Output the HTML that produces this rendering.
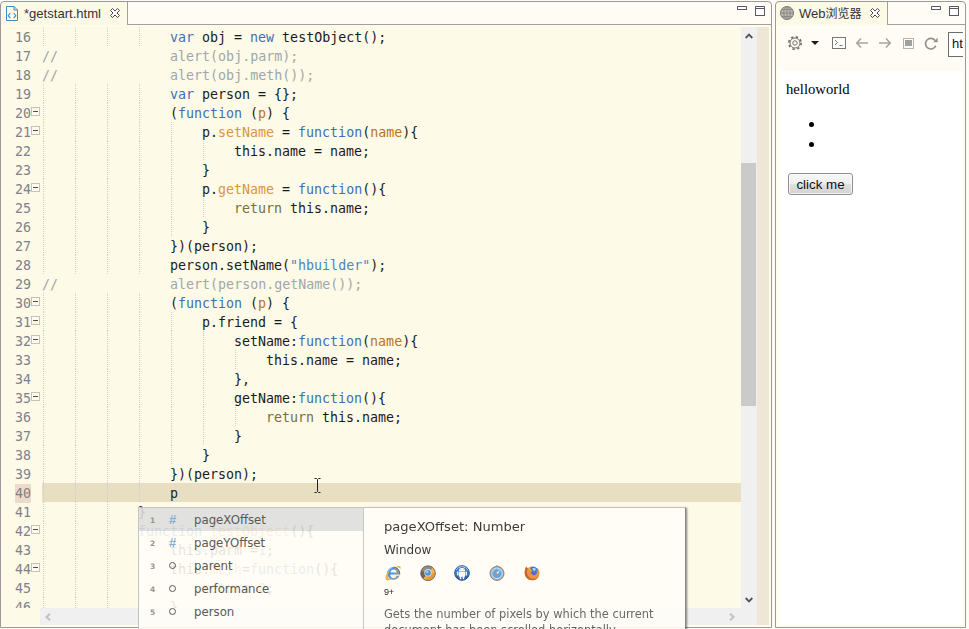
<!DOCTYPE html>
<html><head><meta charset="utf-8"><title>HBuilder</title>
<style>
*{margin:0;padding:0;box-sizing:border-box}
html,body{width:969px;height:629px;overflow:hidden;background:#fdfbf5}
body{position:relative;font-family:"Liberation Sans","Noto Sans CJK SC",sans-serif;font-size:12px;color:#222}
.abs{position:absolute}
/* panels */
.frame{position:absolute;top:1px;height:627px;border:1px solid #9a9a9a;border-radius:4px 4px 0 0;background:#fffde9}
#lp{left:0;width:772px}
#rp{left:775px;width:191px}
.tabbar{position:absolute;top:2px;height:23px;background:#fefcf5;border-bottom:1px solid #a0a0a0}
.tab{position:absolute;top:2px;height:23px;background:#fdf9e7;border-right:1px solid #a0a0a0}
.tabtxt{position:absolute;white-space:nowrap;color:#333}
.ic-min{position:absolute;width:10px;height:4px;border:1px solid #5c5763;background:#fff;border-radius:.5px}
.ic-max{position:absolute;width:10px;height:10px;border:1px solid #5c5763;background:#fff;border-radius:.5px}
.ic-max:after{content:"";position:absolute;left:0;right:0;top:1px;height:1px;background:#5c5763}
/* editor */
#ed{position:absolute;left:0;top:27px;width:741px;height:581px;background:#fdfae8;overflow:hidden;font-family:"DejaVu Sans Mono","Liberation Mono",monospace;font-size:13.3px;color:#1a1a1a}
.ln{position:absolute;left:0;width:741px;height:19px;line-height:19px;white-space:pre}
.ln.cur:before{content:"";position:absolute;left:42px;right:0;top:0;height:19px;background:#e8dfc3}
.ln.cur .num{background:#ecdbca}
.num{position:absolute;top:1px;left:15px;width:16px;text-align:right;color:#828088;letter-spacing:0}
.fold{position:absolute;left:31px;top:4px;width:9px;height:9px;border:1px solid #c3c3b8;background:#fefcf2}
.fold:after{content:"";position:absolute;left:1px;top:3px;width:5px;height:1px;background:#6b4a1f}
.g{position:absolute;top:0;width:1px;height:19px;background:repeating-linear-gradient(to bottom,#cfcfc6 0,#cfcfc6 1px,transparent 1px,transparent 2px)}
.code{position:absolute;top:1px}
.code b{font-weight:normal}
.k{color:#3f6fb3}.f{color:#d99544}.p{color:#b8741f}.c{color:#9ea8aa}.s{color:#4a86c0}.r{color:#7a6e3a}

.frame{pointer-events:none}
.fb{position:absolute;top:2px;height:625px;background:#fffde9}
.sb{position:absolute;background:#f0f0f0}
.thumb{position:absolute;background:#cacaca}
.ovr{position:absolute;background:#eee7d8}
svg{position:absolute;overflow:visible}
/* browser */
#tb{position:absolute;left:778px;top:25px;width:185px;height:46px;background:#fefcf5;overflow:hidden}
#bc{position:absolute;left:778px;top:71px;width:185px;height:554px;background:#fff;font-family:"Liberation Serif",serif;font-size:14.7px;color:#000}
#url{position:absolute;left:170px;top:7px;width:20px;height:25px;border:1px solid #6e6e6e;border-right:0;background:#fff;font-size:13px;line-height:22px;padding-left:3px;color:#111;overflow:hidden}
.btn{position:absolute;left:10px;top:102px;width:65px;height:22px;border:1px solid #8e8f8f;border-radius:3px;background:linear-gradient(#f6f6f6,#f0f0f0 45%,#dedede 55%,#d3d3d3);font-family:"Liberation Sans",sans-serif;font-size:13.33px;line-height:21px;text-align:center;color:#111;box-shadow:inset 0 0 0 1px rgba(255,255,255,.7)}
/* popup */
#pop{position:absolute;left:138px;top:507px;width:549px;height:125px;opacity:.885;z-index:10}
#plist{position:absolute;left:0;top:0;width:226px;height:125px;background:#fffdf6;border:1px solid #bdbdbd;border-right:1px solid #c9c9c9}
#pdoc{position:absolute;left:226px;top:0;width:322px;height:125px;background:#fffdf6;border-top:1px solid #bdbdbd;border-right:1px solid #777;box-shadow:1px 1px 2px rgba(0,0,0,.55)}
.row{position:absolute;left:0;width:224px;height:23px;line-height:25px;font-size:11.75px;color:#444;font-family:"DejaVu Sans","Liberation Sans",sans-serif}
.row.sel{background:#dedede}
.row .n{position:absolute;left:11px;top:0;font-size:7.5px;font-weight:bold;color:#8a8a80;font-family:"DejaVu Sans","Liberation Sans",sans-serif}
.row .h{position:absolute;left:30px;top:-1px;font-size:13px;font-weight:bold;color:#78a4d0;font-family:"Liberation Sans",sans-serif}
.row .o{position:absolute;left:30px;top:7.5px;width:7px;height:7px;border:1.1px solid #444;border-radius:50%}
.row .t{position:absolute;left:55px;top:0;white-space:nowrap}
.dt{position:absolute;left:20px;white-space:nowrap;color:#222;font-family:"DejaVu Sans","Liberation Sans",sans-serif}
</style></head><body>
<div class="fb" style="left:1px;width:770px"></div>
<div class="fb" style="left:776px;width:189px"></div>
<div class="tabbar" style="left:1px;width:770px"></div>
<div class="tab" style="left:1px;width:127px"></div>
<div class="tabbar" style="left:776px;width:189px"></div>
<div class="tab" style="left:776px;width:112px"></div>
<!-- left tab content -->
<svg style="left:6px;top:6px" width="12" height="15" viewBox="0 0 12 15"><path d="M0.5 0.5H8L11.5 4V14.5H0.5Z" fill="none" stroke="#3e8acc"/><path d="M8 0.5V4H11.5" fill="none" stroke="#3e8acc"/><path d="M4.3 7.2L2.2 9.7L4.3 12.2M7.7 7.2L9.8 9.7L7.7 12.2" fill="none" stroke="#3e8acc" stroke-width="1.1"/></svg>
<div class="tabtxt" id="t1" style="left:24px;top:6px;font-size:13.07px;line-height:16px">*getstart.html</div>
<svg class="cx" style="left:110px;top:8px" width="10" height="10" viewBox="0 0 10 10"><path d="M0.5 2.5L2.5 0.5L5 3L7.5 0.5L9.5 2.5L7 5L9.5 7.5L7.5 9.5L5 7L2.5 9.5L0.5 7.5L3 5Z" fill="#fff" stroke="#4a4553" stroke-width="1"/></svg>
<div class="ic-min" style="left:737px;top:6px"></div>
<div class="ic-max" style="left:755px;top:6px"></div>
<!-- right tab content -->
<svg style="left:780px;top:6px" width="14" height="14" viewBox="0 0 14 14"><circle cx="7" cy="7" r="6.5" fill="#b9b9b4" stroke="#77756f"/><path d="M7 0.5V13.5M0.5 7H13.5M1.8 3.5H12.2M1.8 10.5H12.2" stroke="#8b8a84" stroke-width="1" fill="none"/><ellipse cx="7" cy="7" rx="3.2" ry="6.5" fill="none" stroke="#8b8a84"/></svg>
<div class="tabtxt" id="t2" style="left:799px;top:5px;font-size:12px;line-height:17px"><span style="font-size:13px">Web</span>浏览器</div>
<svg class="cx" style="left:870px;top:8px" width="10" height="10" viewBox="0 0 10 10"><path d="M0.5 2.5L2.5 0.5L5 3L7.5 0.5L9.5 2.5L7 5L9.5 7.5L7.5 9.5L5 7L2.5 9.5L0.5 7.5L3 5Z" fill="#fff" stroke="#4a4553" stroke-width="1"/></svg>
<div class="ic-min" style="left:931px;top:6px"></div>
<div class="ic-max" style="left:949px;top:6px"></div>
<!-- editor -->
<div id="ed">
<div class="ln" style="top:0px"><span class="num">16</span><i class="g" style="left:43px"></i><i class="g" style="left:75px"></i><i class="g" style="left:107px"></i><i class="g" style="left:139px"></i><span class="code" style="left:170px"><b class="k">var</b> obj = <b class="k">new</b> testObject();</span></div>
<div class="ln" style="top:19px"><span class="num">17</span><span class="code" style="left:42px"><b class="c">//              alert(obj.parm);</b></span></div>
<div class="ln" style="top:38px"><span class="num">18</span><span class="code" style="left:42px"><b class="c">//              alert(obj.meth());</b></span></div>
<div class="ln" style="top:57px"><span class="num">19</span><i class="g" style="left:43px"></i><i class="g" style="left:75px"></i><i class="g" style="left:107px"></i><i class="g" style="left:139px"></i><span class="code" style="left:170px"><b class="k">var</b> person = {};</span></div>
<div class="ln" style="top:76px"><span class="num">20</span><i class="fold"></i><i class="g" style="left:43px"></i><i class="g" style="left:75px"></i><i class="g" style="left:107px"></i><i class="g" style="left:139px"></i><span class="code" style="left:170px">(<b class="k">function</b> (<b class="p">p</b>) {</span></div>
<div class="ln" style="top:95px"><span class="num">21</span><i class="fold"></i><i class="g" style="left:43px"></i><i class="g" style="left:75px"></i><i class="g" style="left:107px"></i><i class="g" style="left:139px"></i><i class="g" style="left:171px"></i><span class="code" style="left:202px">p.<b class="f">setName</b> = <b class="k">function</b>(<b class="p">name</b>){</span></div>
<div class="ln" style="top:114px"><span class="num">22</span><i class="g" style="left:43px"></i><i class="g" style="left:75px"></i><i class="g" style="left:107px"></i><i class="g" style="left:139px"></i><i class="g" style="left:171px"></i><i class="g" style="left:203px"></i><span class="code" style="left:234px">this.name = name;</span></div>
<div class="ln" style="top:133px"><span class="num">23</span><i class="g" style="left:43px"></i><i class="g" style="left:75px"></i><i class="g" style="left:107px"></i><i class="g" style="left:139px"></i><i class="g" style="left:171px"></i><span class="code" style="left:202px">}</span></div>
<div class="ln" style="top:152px"><span class="num">24</span><i class="fold"></i><i class="g" style="left:43px"></i><i class="g" style="left:75px"></i><i class="g" style="left:107px"></i><i class="g" style="left:139px"></i><i class="g" style="left:171px"></i><span class="code" style="left:202px">p.<b class="f">getName</b> = <b class="k">function</b>(){</span></div>
<div class="ln" style="top:171px"><span class="num">25</span><i class="g" style="left:43px"></i><i class="g" style="left:75px"></i><i class="g" style="left:107px"></i><i class="g" style="left:139px"></i><i class="g" style="left:171px"></i><i class="g" style="left:203px"></i><span class="code" style="left:234px"><b class="r">return</b> this.name;</span></div>
<div class="ln" style="top:190px"><span class="num">26</span><i class="g" style="left:43px"></i><i class="g" style="left:75px"></i><i class="g" style="left:107px"></i><i class="g" style="left:139px"></i><i class="g" style="left:171px"></i><span class="code" style="left:202px">}</span></div>
<div class="ln" style="top:209px"><span class="num">27</span><i class="g" style="left:43px"></i><i class="g" style="left:75px"></i><i class="g" style="left:107px"></i><i class="g" style="left:139px"></i><span class="code" style="left:170px">})(person);</span></div>
<div class="ln" style="top:228px"><span class="num">28</span><i class="g" style="left:43px"></i><i class="g" style="left:75px"></i><i class="g" style="left:107px"></i><i class="g" style="left:139px"></i><span class="code" style="left:170px">person.setName(<b class="s">"hbuilder"</b>);</span></div>
<div class="ln" style="top:247px"><span class="num">29</span><span class="code" style="left:42px"><b class="c">//              alert(person.getName());</b></span></div>
<div class="ln" style="top:266px"><span class="num">30</span><i class="fold"></i><i class="g" style="left:43px"></i><i class="g" style="left:75px"></i><i class="g" style="left:107px"></i><i class="g" style="left:139px"></i><span class="code" style="left:170px">(<b class="k">function</b> (<b class="p">p</b>) {</span></div>
<div class="ln" style="top:285px"><span class="num">31</span><i class="fold"></i><i class="g" style="left:43px"></i><i class="g" style="left:75px"></i><i class="g" style="left:107px"></i><i class="g" style="left:139px"></i><i class="g" style="left:171px"></i><span class="code" style="left:202px">p.friend = {</span></div>
<div class="ln" style="top:304px"><span class="num">32</span><i class="fold"></i><i class="g" style="left:43px"></i><i class="g" style="left:75px"></i><i class="g" style="left:107px"></i><i class="g" style="left:139px"></i><i class="g" style="left:171px"></i><i class="g" style="left:203px"></i><span class="code" style="left:234px">setName:<b class="k">function</b>(<b class="p">name</b>){</span></div>
<div class="ln" style="top:323px"><span class="num">33</span><i class="g" style="left:43px"></i><i class="g" style="left:75px"></i><i class="g" style="left:107px"></i><i class="g" style="left:139px"></i><i class="g" style="left:171px"></i><i class="g" style="left:203px"></i><i class="g" style="left:235px"></i><span class="code" style="left:266px">this.name = name;</span></div>
<div class="ln" style="top:342px"><span class="num">34</span><i class="g" style="left:43px"></i><i class="g" style="left:75px"></i><i class="g" style="left:107px"></i><i class="g" style="left:139px"></i><i class="g" style="left:171px"></i><i class="g" style="left:203px"></i><span class="code" style="left:234px">},</span></div>
<div class="ln" style="top:361px"><span class="num">35</span><i class="fold"></i><i class="g" style="left:43px"></i><i class="g" style="left:75px"></i><i class="g" style="left:107px"></i><i class="g" style="left:139px"></i><i class="g" style="left:171px"></i><i class="g" style="left:203px"></i><span class="code" style="left:234px">getName:<b class="k">function</b>(){</span></div>
<div class="ln" style="top:380px"><span class="num">36</span><i class="g" style="left:43px"></i><i class="g" style="left:75px"></i><i class="g" style="left:107px"></i><i class="g" style="left:139px"></i><i class="g" style="left:171px"></i><i class="g" style="left:203px"></i><i class="g" style="left:235px"></i><span class="code" style="left:266px"><b class="r">return</b> this.name;</span></div>
<div class="ln" style="top:399px"><span class="num">37</span><i class="g" style="left:43px"></i><i class="g" style="left:75px"></i><i class="g" style="left:107px"></i><i class="g" style="left:139px"></i><i class="g" style="left:171px"></i><i class="g" style="left:203px"></i><span class="code" style="left:234px">}</span></div>
<div class="ln" style="top:418px"><span class="num">38</span><i class="g" style="left:43px"></i><i class="g" style="left:75px"></i><i class="g" style="left:107px"></i><i class="g" style="left:139px"></i><i class="g" style="left:171px"></i><span class="code" style="left:202px">}</span></div>
<div class="ln" style="top:437px"><span class="num">39</span><i class="g" style="left:43px"></i><i class="g" style="left:75px"></i><i class="g" style="left:107px"></i><i class="g" style="left:139px"></i><span class="code" style="left:170px">})(person);</span></div>
<div class="ln cur" style="top:456px"><span class="num">40</span><i class="g" style="left:43px"></i><i class="g" style="left:75px"></i><i class="g" style="left:107px"></i><i class="g" style="left:139px"></i><span class="code" style="left:170px">p</span></div>
<div class="ln" style="top:475px"><span class="num">41</span><i class="g" style="left:43px"></i><i class="g" style="left:75px"></i><i class="g" style="left:107px"></i><span class="code" style="left:138px">}</span></div>
<div class="ln" style="top:494px"><span class="num">42</span><i class="fold"></i><i class="g" style="left:43px"></i><i class="g" style="left:75px"></i><i class="g" style="left:107px"></i><span class="code" style="left:138px"><b class="k">function</b> <b class="f">testObject</b>(){</span></div>
<div class="ln" style="top:513px"><span class="num">43</span><i class="g" style="left:43px"></i><i class="g" style="left:75px"></i><i class="g" style="left:107px"></i><i class="g" style="left:139px"></i><span class="code" style="left:170px">this.parm =<b class="s">1</b>;</span></div>
<div class="ln" style="top:532px"><span class="num">44</span><i class="fold"></i><i class="g" style="left:43px"></i><i class="g" style="left:75px"></i><i class="g" style="left:107px"></i><i class="g" style="left:139px"></i><span class="code" style="left:170px">this.<b class="f">meth</b>=<b class="k">function</b>(){</span></div>
<div class="ln" style="top:551px"><span class="num">45</span><i class="g" style="left:43px"></i><i class="g" style="left:75px"></i><i class="g" style="left:107px"></i><i class="g" style="left:139px"></i><i class="g" style="left:171px"></i><span class="code" style="left:202px"><b class="r">return</b> <b class="s">2</b>;</span></div>
<div class="ln" style="top:570px"><span class="num">46</span><i class="g" style="left:43px"></i><i class="g" style="left:75px"></i><i class="g" style="left:107px"></i><i class="g" style="left:139px"></i><span class="code" style="left:170px">}</span></div>
</div>
<!-- scrollbars -->
<div class="abs" style="left:1px;top:608px;width:39px;height:17px;background:#fdfae8"></div>
<div class="sb" style="left:741px;top:27px;width:16px;height:598px"></div>
<div class="sb" style="left:40px;top:608px;width:701px;height:17px"></div>
<div class="thumb" style="left:741px;top:163px;width:15px;height:243px"></div>
<div class="ovr" style="left:757px;top:27px;width:12px;height:598px"></div>
<svg style="left:745px;top:33px" width="8" height="6" viewBox="0 0 8 6"><path d="M0.7 5L4 1.6L7.3 5" fill="none" stroke="#56505f" stroke-width="1.8"/></svg>
<svg style="left:745px;top:597px" width="8" height="6" viewBox="0 0 8 6"><path d="M0.7 1L4 4.4L7.3 1" fill="none" stroke="#56505f" stroke-width="1.8"/></svg>
<svg style="left:45px;top:613px" width="6" height="8" viewBox="0 0 6 8"><path d="M5 0.7L1.5 4L5 7.3" fill="none" stroke="#c2c2c2" stroke-width="2"/></svg>
<svg style="left:729px;top:613px" width="6" height="8" viewBox="0 0 6 8"><path d="M1 0.7L4.5 4L1 7.3" fill="none" stroke="#c2c2c2" stroke-width="2"/></svg>
<!-- mouse I-beam -->
<svg style="left:314px;top:478px" width="7" height="15" viewBox="0 0 7 15"><path d="M0.5 0.5H2.5L3.5 1.5L4.5 0.5H6.5M3.5 1.5V13.5M0.5 14.5H2.5L3.5 13.5L4.5 14.5H6.5" fill="none" stroke="#222" stroke-width="1"/></svg>
<!-- browser toolbar -->
<div id="tb"><div id="url">ht</div></div>
<svg style="left:788px;top:36px" width="14" height="14" viewBox="0 0 14 14"><circle cx="7" cy="7" r="5" fill="none" stroke="#6f6f6a" stroke-width="1"/><circle cx="7" cy="7" r="2.2" fill="none" stroke="#6f6f6a" stroke-width="1"/><circle cx="7" cy="7" r="6.2" fill="none" stroke="#6f6f6a" stroke-width="1.6" stroke-dasharray="2.4 2.47"/></svg>
<svg style="left:811px;top:41px" width="8" height="4" viewBox="0 0 8 4"><path d="M0 0H8L4 4Z" fill="#2a1518"/></svg>
<svg style="left:832px;top:37px" width="14" height="12" viewBox="0 0 14 12"><rect x="0.5" y="0.5" width="13" height="11" fill="#fff" stroke="#77776f"/><path d="M3 3L5.5 5.5L3 8M7.5 8.5H10.5" fill="none" stroke="#77776f" stroke-width="1"/></svg>
<svg style="left:856px;top:38px" width="12" height="10" viewBox="0 0 12 10"><path d="M5 0.5L0.8 5L5 9.5M1 5H12" fill="none" stroke="#a5a5a0" stroke-width="1.6"/></svg>
<svg style="left:879px;top:38px" width="12" height="10" viewBox="0 0 12 10"><path d="M7 0.5L11.2 5L7 9.5M11 5H0" fill="none" stroke="#a5a5a0" stroke-width="1.6"/></svg>
<svg style="left:903px;top:38px" width="11" height="11" viewBox="0 0 11 11"><rect x="0.5" y="0.5" width="10" height="10" fill="#fdfdfb" stroke="#b5b5b0"/><rect x="2" y="2" width="7" height="6" fill="#a0a09c"/></svg>
<svg style="left:924px;top:37px" width="14" height="13" viewBox="0 0 14 13"><path d="M11.2 3.6A5.3 5.3 0 1 0 11.8 8.6" fill="none" stroke="#8f8f8a" stroke-width="1.6"/><path d="M13.6 0.8V5.2H9.2Z" fill="#8f8f8a"/></svg>
<!-- browser content -->
<div id="bc">
  <div style="position:absolute;left:8px;top:9px;line-height:18px">helloworld</div>
  <div style="position:absolute;left:31px;top:51px;width:5px;height:5px;border-radius:50%;background:#000"></div>
  <div style="position:absolute;left:31px;top:71px;width:5px;height:5px;border-radius:50%;background:#000"></div>
  <div class="btn">click me</div>
</div>
<div id="lp" class="frame" style="background:none;z-index:5"></div>
<div id="rp" class="frame" style="background:none;z-index:5"></div>
<!-- popup -->
<div id="pop">
  <div id="plist">
    <div class="row sel" style="top:0"><span class="n">1</span><span class="h">#</span><span class="t">pageXOffset</span></div>
    <div class="row" style="top:23px"><span class="n">2</span><span class="h">#</span><span class="t">pageYOffset</span></div>
    <div class="row" style="top:46px"><span class="n">3</span><i class="o"></i><span class="t">parent</span></div>
    <div class="row" style="top:69px"><span class="n">4</span><i class="o"></i><span class="t">performance</span></div>
    <div class="row" style="top:92px"><span class="n">5</span><i class="o"></i><span class="t">person</span></div>
  </div>
  <div id="pdoc">
    <div class="dt" style="top:10px;font-size:13.09px;line-height:18px">pageXOffset: Number</div>
    <div class="dt" style="top:34px;font-size:12px;line-height:17px">Window</div>
    <div class="dt" style="top:79px;font-size:9px;line-height:11px;color:#000;font-family:'Liberation Sans',sans-serif;letter-spacing:-.3px">9+</div>
    <div class="dt" style="top:99px;font-size:11.42px;line-height:15.5px;white-space:normal;width:300px;color:#555">Gets the number of pixels by which the current document has been scrolled horizontally.</div>
    <svg style="left:21px;top:57px" width="16" height="16" viewBox="0 0 16 16"><circle cx="8.4" cy="8.4" r="6.3" fill="#2f86de"/><path d="M8.4 2.1A6.3 6.3 0 0 1 14.7 8.4V9.6H9L9.4 2.2Z" fill="#85888c"/><path d="M9.2 2.1A6.3 6.3 0 0 1 14.7 8.4V9.6" fill="none" stroke="#4f5256" stroke-width="0.9"/><path d="M14.5 10.6A6.3 6.3 0 0 1 9.4 14.6L9.4 12.4A3 3 0 0 0 11.4 10.6Z" fill="#85888c"/><path d="M5.6 7.4H11.6A3 3 0 0 0 5.6 7.4Z" fill="#f3f3ee"/><path d="M5.4 9.6H14.6V10.7H11.5A3.1 3.1 0 0 1 5.4 9.6Z" fill="#f3f3ee"/><path d="M3.2 5.6A6 6 0 0 1 7 2.6" fill="none" stroke="#9ccdf6" stroke-width="1"/><path d="M1.2 15C-0.8 11.4 2.4 6.2 7.6 2.4C4 5.6 1.8 10.2 3 12.6C3.8 14.2 6 14 8 13.2C5.6 15 2.4 16.2 1.2 15Z" fill="#eda932"/><path d="M11 1.6C13.4 0.6 15.2 0.8 15.6 2.2C15.8 3 15.6 3.8 15.2 4.6C15.2 3.2 14.4 2.4 12.6 2.6Z" fill="#eda932"/></svg>
    <svg style="left:56px;top:57px" width="16" height="16" viewBox="0 0 16 16"><circle cx="8" cy="8.2" r="7.4" fill="#55524f"/><path d="M8 8.2L1.2 5.4A7.4 7.4 0 0 1 12.6 2.4Z" fill="#807b76"/><path d="M8 8.2L3.2 13.8A7.4 7.4 0 0 0 12.6 2.4Z" fill="#f2a83e"/><path d="M8 8.2L6 15.3A7.4 7.4 0 0 0 15.4 8.2Z" fill="#e38d24"/><circle cx="8" cy="7.8" r="3.7" fill="#eadcc4"/><circle cx="8" cy="7.8" r="2.9" fill="#3c86d8"/><circle cx="7.2" cy="6.9" r="1.2" fill="#9cc8f2"/><circle cx="8" cy="8.2" r="7.4" fill="none" stroke="#3d3b3a" stroke-width="0.6"/></svg>
    <svg style="left:90px;top:57px" width="16" height="16" viewBox="0 0 16 16"><circle cx="8" cy="8" r="7.5" fill="#2a6fcc"/><path d="M1.2 10.4A7.5 7.5 0 0 0 14.8 10.4Z" fill="#1d4fa0"/><circle cx="8" cy="8" r="7.3" fill="none" stroke="#193a7c" stroke-width="0.9"/><path d="M2 5.2A6.6 6.6 0 0 1 14 5.2" fill="none" stroke="#8ec2f4" stroke-width="0.9"/><path d="M4.9 5.9A3.1 2.9 0 0 1 11.1 5.9Z" fill="#fff"/><rect x="4.9" y="6.5" width="6.2" height="5.2" rx="0.5" fill="#fff"/><rect x="3.1" y="6.5" width="1.3" height="4" rx="0.6" fill="#fff"/><rect x="11.6" y="6.5" width="1.3" height="4" rx="0.6" fill="#fff"/><rect x="5.8" y="11" width="1.5" height="3.2" rx="0.6" fill="#fff"/><rect x="8.7" y="11" width="1.5" height="3.2" rx="0.6" fill="#fff"/><path d="M5.6 2.2L6.5 3.7M10.4 2.2L9.5 3.7" stroke="#fff" stroke-width="0.7"/><circle cx="6.7" cy="4.6" r="0.45" fill="#2a6fcc"/><circle cx="9.3" cy="4.6" r="0.45" fill="#2a6fcc"/></svg>
    <svg style="left:125px;top:57px" width="16" height="16" viewBox="0 0 16 16"><circle cx="8" cy="8.4" r="7" fill="#a3a5a8"/><circle cx="8" cy="8.4" r="7" fill="none" stroke="#6f7276" stroke-width="1"/><circle cx="8" cy="8.4" r="5.2" fill="#4c9be2"/><circle cx="8" cy="8.4" r="5.2" fill="none" stroke="#e4eaf0" stroke-width="0.8"/><path d="M3.6 7A4.6 4.6 0 0 1 12.4 7" fill="none" stroke="#8cc4f4" stroke-width="1"/><path d="M11.2 5.1L8.7 9.1L7.3 7.7Z" fill="#f4f4f4"/><path d="M4.8 11.7L7.3 7.7L8.7 9.1Z" fill="#e86a4c"/><rect x="7" y="0.4" width="2" height="1.5" fill="#86898d"/></svg>
    <svg style="left:160px;top:57px" width="16" height="16" viewBox="0 0 16 16"><circle cx="9" cy="7.2" r="5.6" fill="#2f5fc6"/><path d="M8.2 3.4C9.8 2.6 11.8 3.2 12.6 4.6C11.4 4.4 10.8 5 11.2 6.2C10 6.4 9.2 5.4 8.2 3.4Z" fill="#a8c8f2"/><path d="M12.6 6.4C13.4 7 13.6 8 13.2 9" fill="none" stroke="#7fa8e6" stroke-width="0.8"/><path d="M2.2 1.4C2.6 2.4 3.4 2.9 4.2 3.1C5.2 2.1 6.6 1.5 8 1.5C6.6 2.3 6.2 3.5 6.6 4.5C7.6 4.7 8.4 5.3 8.6 6.3L6.8 7.1C6.8 8.9 8 10.2 9.8 10.2C11.8 10.2 13 8.8 13.2 7.2C13.8 5 13.6 3.6 13.2 2.8C15 4.4 15.7 6.4 15.5 8.6C15.1 12.6 11.9 15.3 8.2 15.3C4 15.3 0.7 11.9 0.7 7.8C0.7 5.2 1.4 3.1 2.2 1.4Z" fill="#ea8a28"/><path d="M2.2 1.4C2.6 2.4 3.4 2.9 4.2 3.1C3.2 4.4 2.8 6 3 7.6C3.2 11 5.8 13.6 9 13.8C11.6 14 14.2 12.4 15.2 10C14.6 13 11.8 15.3 8.2 15.3C4 15.3 0.7 11.9 0.7 7.8C0.7 5.2 1.4 3.1 2.2 1.4Z" fill="#b9561a"/><path d="M4.4 3.2C5 4 5.8 4.4 6.6 4.5" fill="none" stroke="#f7c66a" stroke-width="0.8"/></svg>
  </div>
</div>
</body></html>
